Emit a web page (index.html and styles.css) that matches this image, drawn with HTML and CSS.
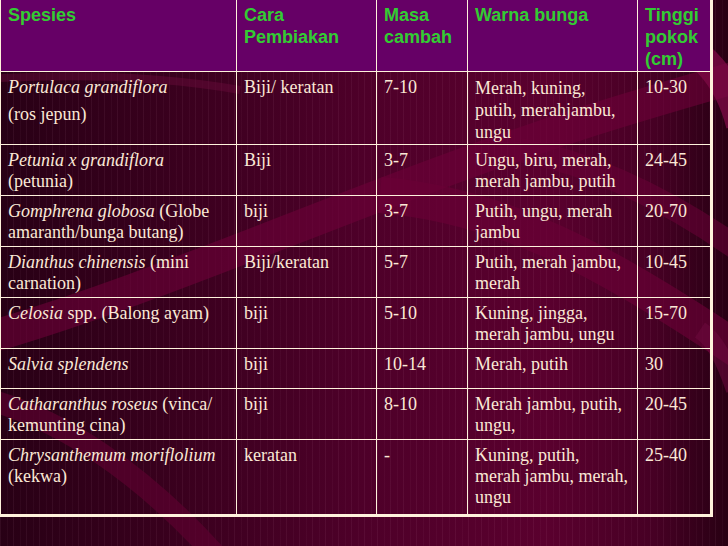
FILE: index.html
```html
<!DOCTYPE html>
<html lang="ms">
<head>
<meta charset="utf-8">
<title>Spesies bunga</title>
<link rel="stylesheet" href="styles.css">
</head>
<body>
<div class="slide">
  <svg class="swirls" width="728" height="546" viewBox="0 0 728 546" aria-hidden="true">
    <path d="M-20 340 C 120 300, 260 240, 420 180 S 660 100, 760 70" stroke="#6e0038" stroke-opacity="0.6" stroke-width="32" fill="none"/>
    <path d="M380 195 C 500 205, 600 255, 760 365" stroke="#6a0036" stroke-opacity="0.65" stroke-width="36" fill="none"/>
    <path d="M520 150 C 600 165, 680 205, 760 265" stroke="#6a0036" stroke-opacity="0.55" stroke-width="24" fill="none"/>
    <path d="M650 30 C 705 45, 730 85, 740 125" stroke="#7e0a46" stroke-opacity="0.75" stroke-width="28" fill="none"/>
    <path d="M-10 400 C 60 420, 140 470, 220 560" stroke="#5e0030" stroke-opacity="0.65" stroke-width="22" fill="none"/>
    <path d="M0 78 C 80 74, 160 76, 240 90" stroke="#6a0a3c" stroke-opacity="0.45" stroke-width="8" fill="none"/>
    <path d="M700 330 C 715 340, 725 360, 735 390" stroke="#6e0a3e" stroke-opacity="0.55" stroke-width="18" fill="none"/>
  </svg>
  <table class="plants">
    <colgroup>
      <col class="c1"><col class="c2"><col class="c3"><col class="c4"><col class="c5">
    </colgroup>
    <thead>
      <tr class="head">
        <th>Spesies</th>
        <th>Cara<br>Pembiakan</th>
        <th>Masa<br>cambah</th>
        <th>Warna bunga</th>
        <th>Tinggi<br>pokok<br>(cm)</th>
      </tr>
    </thead>
    <tbody>
      <tr class="r1">
        <td><i>Portulaca grandiflora</i><span class="para">(ros jepun)</span></td>
        <td>Biji/ keratan</td>
        <td>7-10</td>
        <td class="loose">Merah, kuning,<br>putih, merahjambu,<br>ungu</td>
        <td>10-30</td>
      </tr>
      <tr class="r2">
        <td><i>Petunia x grandiflora</i><br>(petunia)</td>
        <td>Biji</td>
        <td>3-7</td>
        <td>Ungu, biru, merah,<br>merah jambu, putih</td>
        <td>24-45</td>
      </tr>
      <tr class="r2">
        <td><i>Gomphrena globosa</i> (Globe<br>amaranth/bunga butang)</td>
        <td>biji</td>
        <td>3-7</td>
        <td>Putih, ungu, merah<br>jambu</td>
        <td>20-70</td>
      </tr>
      <tr class="r2">
        <td><i>Dianthus chinensis</i> (mini<br>carnation)</td>
        <td>Biji/keratan</td>
        <td>5-7</td>
        <td>Putih, merah jambu,<br>merah</td>
        <td>10-45</td>
      </tr>
      <tr class="r2">
        <td><i>Celosia</i> spp. (Balong ayam)</td>
        <td>biji</td>
        <td>5-10</td>
        <td>Kuning, jingga,<br>merah jambu, ungu</td>
        <td>15-70</td>
      </tr>
      <tr class="r3">
        <td><i>Salvia splendens</i></td>
        <td>biji</td>
        <td>10-14</td>
        <td>Merah, putih</td>
        <td>30</td>
      </tr>
      <tr class="r2">
        <td><i>Catharanthus roseus</i> (vinca/<br>kemunting cina)</td>
        <td>biji</td>
        <td>8-10</td>
        <td>Merah jambu, putih,<br>ungu,</td>
        <td>20-45</td>
      </tr>
      <tr class="r4">
        <td><i>Chrysanthemum moriflolium</i><br>(kekwa)</td>
        <td>keratan</td>
        <td>-</td>
        <td>Kuning, putih,<br>merah jambu, merah,<br>ungu</td>
        <td>25-40</td>
      </tr>
    </tbody>
  </table>
</div>
</body>
</html>
```
FILE: styles.css
```css
html, body {
  margin: 0;
  padding: 0;
}

body {
  width: 728px;
  height: 546px;
  overflow: hidden;
  background: #3a0020;
}

.slide {
  position: relative;
  width: 728px;
  height: 546px;
  overflow: hidden;
  background:
    repeating-linear-gradient(90deg, rgba(255, 190, 220, 0.06) 0 1px, transparent 1px 7px, rgba(255, 190, 220, 0.035) 7px 8px, transparent 8px 13px),
    linear-gradient(90deg, #280015 0%, #3a001e 25%, #4e0029 50%, #5a002e 75%, #460024 90%, #280013 100%);
}

.swirls {
  position: absolute;
  left: 0;
  top: 0;
  z-index: 0;
}

.plants {
  position: relative;
  z-index: 1;
  width: 711px;
  table-layout: fixed;
  border-collapse: collapse;
  border-left: 1px solid #fff2dc;
  border-right: 3px solid #fff2dc;
  border-bottom: 3px solid #fff2dc;
  font-family: "Liberation Serif", "Times New Roman", serif;
  font-size: 18px;
  line-height: 21px;
  color: #fbe9d6;
}

.c1 { width: 236px; }
.c2 { width: 140px; }
.c3 { width: 91px; }
.c4 { width: 170px; }
.c5 { width: 74px; }

.plants th,
.plants td {
  border: 1px solid #fff2dc;
  padding: 5px 7px 0 7px;
  vertical-align: top;
  text-align: left;
  white-space: nowrap;
}

.plants thead tr:first-child th {
  border-top: none;
}

.plants th {
  background: #660066;
  color: #33cc33;
  font-family: "Liberation Sans", Arial, sans-serif;
  font-weight: bold;
  font-size: 18px;
  line-height: 22px;
  padding-top: 4px;
  height: 67px;
}

.plants td i {
  font-style: italic;
}

.para {
  display: block;
  margin-top: 6px;
}

.loose {
  line-height: 22px;
}

.r1 td { height: 67px; }
.r2 td { height: 45px; }
.r3 td { height: 34px; }
.r4 td { height: 69px; }
```
